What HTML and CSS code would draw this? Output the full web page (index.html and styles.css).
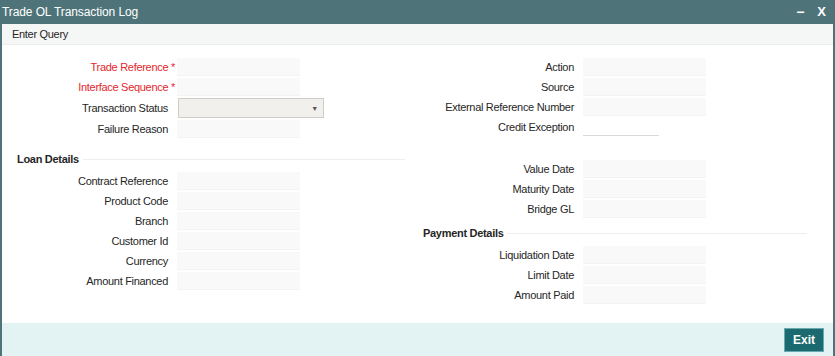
FILE: index.html
```html
<!DOCTYPE html>
<html lang="en">
<head>
  <meta charset="UTF-8">
  <title>Trade OL Transaction Log</title>
  <link rel="stylesheet" href="styles.css">
</head>
<body>
  <div class="window">
    <div class="titlebar">
      <span class="title">Trade OL Transaction Log</span>
      <span class="controls"><span class="min">&minus;</span><span class="close">X</span></span>
    </div>
    <div class="toolbar">Enter Query</div>

    <div class="content">
      <div class="col left">
        <div class="row"><label class="req">Trade Reference <b>*</b></label><span class="field"></span></div>
        <div class="row"><label class="req">Interface Sequence <b>*</b></label><span class="field"></span></div>
        <div class="row row-select"><label>Transaction Status</label><span class="select"><span class="arrow">&#9660;</span></span></div>
        <div class="row"><label>Failure Reason</label><span class="field"></span></div>

        <div class="section loan"><span class="legend">Loan Details</span><span class="rule"></span></div>
        <div class="row"><label>Contract Reference</label><span class="field"></span></div>
        <div class="row"><label>Product Code</label><span class="field"></span></div>
        <div class="row"><label>Branch</label><span class="field"></span></div>
        <div class="row"><label>Customer Id</label><span class="field"></span></div>
        <div class="row"><label>Currency</label><span class="field"></span></div>
        <div class="row"><label>Amount Financed</label><span class="field"></span></div>
      </div>

      <div class="col right">
        <div class="row"><label>Action</label><span class="field"></span></div>
        <div class="row"><label>Source</label><span class="field"></span></div>
        <div class="row"><label>External Reference Number</label><span class="field"></span></div>
        <div class="row"><label>Credit Exception</label><span class="field line"></span></div>

        <div class="row first-date"><label>Value Date</label><span class="field"></span></div>
        <div class="row"><label>Maturity Date</label><span class="field"></span></div>
        <div class="row"><label>Bridge GL</label><span class="field"></span></div>

        <div class="section payment"><span class="legend">Payment Details</span><span class="rule"></span></div>
        <div class="row"><label>Liquidation Date</label><span class="field"></span></div>
        <div class="row"><label>Limit Date</label><span class="field"></span></div>
        <div class="row"><label>Amount Paid</label><span class="field"></span></div>
      </div>
    </div>

    <div class="footer">
      <button type="button" class="exit">Exit</button>
    </div>
  </div>
</body>
</html>
```

FILE: styles.css
```css
html, body {
  margin: 0;
  padding: 0;
  background: #ffffff;
}
body {
  font-family: "Liberation Sans", Arial, sans-serif;
  font-size: 11px;
  letter-spacing: -0.3px;
  color: #262626;
}
.window {
  width: 835px;
  height: 356px;
  box-sizing: border-box;
  border-left: 2px solid #4e7479;
  border-right: 2px solid #4e7479;
  display: flex;
  flex-direction: column;
}
.titlebar {
  height: 24px;
  background: #4e7479;
  color: #fff;
  display: flex;
  align-items: center;
  justify-content: space-between;
  padding: 0 9px 0 2px;
  margin: 0 -2px;
}
.title {
  font-size: 12px;
  letter-spacing: -0.1px;
}
.controls {
  display: flex;
  gap: 13px;
  font-weight: bold;
  font-size: 13px;
  letter-spacing: 0;
}
.controls .min {
  font-size: 14px;
}
.toolbar {
  height: 20px;
  line-height: 20px;
  background: #f5f6f6;
  border-bottom: 1px solid #ebeded;
  padding-left: 10px;
}
.content {
  flex: 1;
  display: flex;
  padding-top: 12px;
}
.col {
  display: flex;
  flex-direction: column;
}
.left {
  width: 403px;
}
.right {
  width: 426px;
}
.row {
  display: flex;
  align-items: center;
  height: 20px;
  gap: 9px;
}
.row label {
  text-align: right;
  white-space: nowrap;
}
.left .row label {
  width: 166px;
}
.right .row label {
  width: 169px;
}
.req {
  color: #e3262d;
}
.req b {
  font-weight: normal;
  margin-right: -7px;
}
.field {
  width: 123px;
  height: 18px;
  background: #f9f9f9;
  border-bottom: 1px solid #f3f3f3;
  box-sizing: border-box;
}
.field.line {
  width: 76px;
  background: none;
  border-bottom: 1px solid #d9d9d9;
}
.row-select {
  height: 22px;
}
.select {
  width: 146px;
  height: 20px;
  margin-left: 1px;
  box-sizing: border-box;
  background: #f2f0ec;
  border: 1px solid #cfcdc8;
  display: flex;
  align-items: center;
  justify-content: flex-end;
  padding-right: 5px;
}
.arrow {
  font-size: 7px;
  color: #555;
}
.section {
  display: flex;
  align-items: center;
  height: 16px;
  font-weight: bold;
  margin-bottom: 4px;
}
.legend {
  padding-right: 4px;
}
.rule {
  flex: 1;
  border-top: 1px solid #eeeeee;
}
.loan {
  margin-top: 12px;
  padding-left: 15px;
}
.first-date {
  margin-top: 22px;
}
.payment {
  margin-top: 6px;
  padding-left: 18px;
  margin-right: 24px;
}
.footer {
  height: 33px;
  background: #e3f2f3;
  display: flex;
  align-items: center;
  justify-content: flex-end;
  padding-right: 9px;
}
.exit {
  width: 40px;
  height: 24px;
  background: #1b6a70;
  color: #fff;
  border: 1px solid #6aa9ad;
  font-family: "Liberation Sans", Arial, sans-serif;
  font-size: 12px;
  font-weight: bold;
  padding: 0;
  cursor: pointer;
}
```
